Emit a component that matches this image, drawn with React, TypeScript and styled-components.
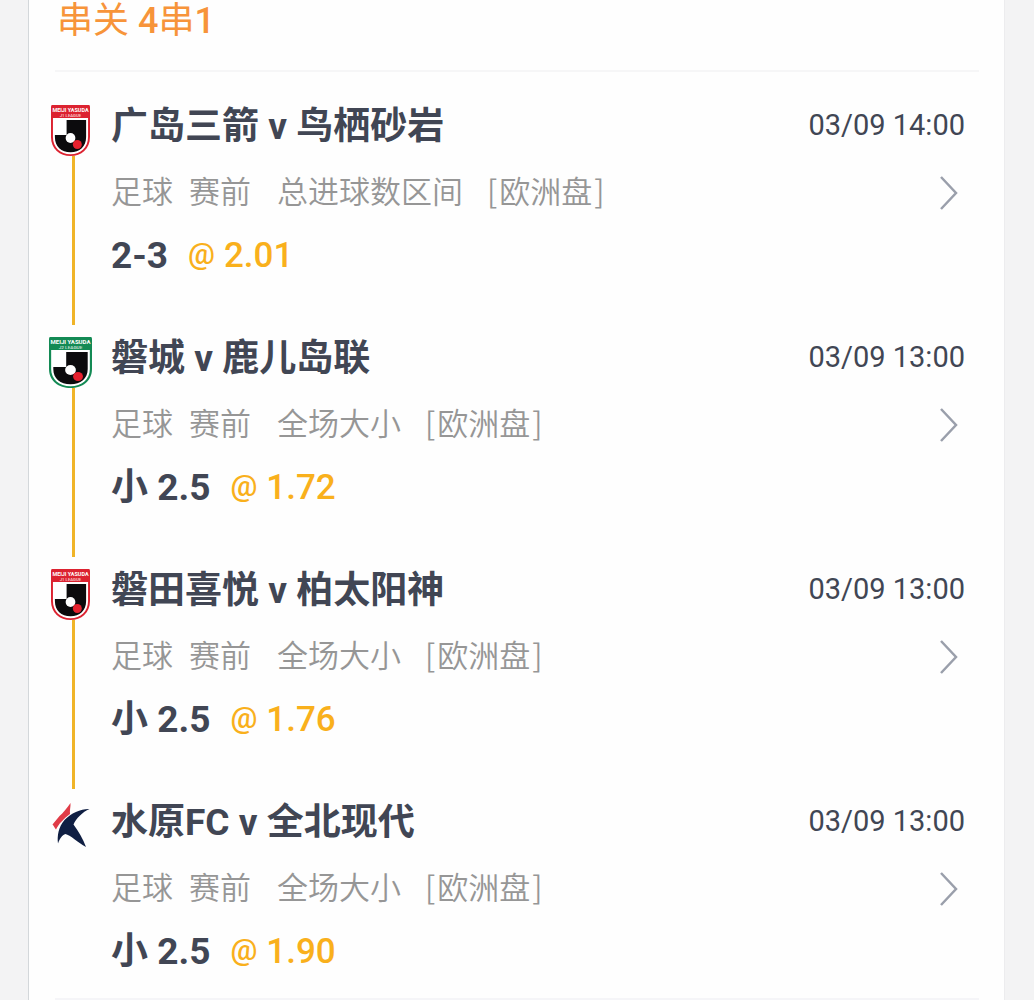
import React from "react";
import styled, { createGlobalStyle } from "styled-components";

const GlobalStyle = createGlobalStyle`
  * { box-sizing: border-box; }
  body {
    margin: 0;
    background: #f3f3f4;
    font-family: Roboto, "Noto Sans CJK SC", sans-serif;
    color: #414654;
  }
`;

const Slip = styled.main`
  min-height: 100vh;
  margin: 0 29px 0 28px;
  padding: 0 25px 0 26px;
  background: #fefefe;
  border-left: 1px solid #d3d7da;
  border-right: 1px solid #ececee;
`;

const Heading = styled.h1`
  margin: 0;
  padding: 0 2px 28px;
  font-size: 36px;
  line-height: 42px;
  font-weight: 400;
  color: #f7943a;
  border-bottom: 2px solid #f6f6f7;
`;

const Count = styled.span`
  font-weight: 500;
`;

const Legs = styled.ol`
  list-style: none;
  margin: 0;
  padding: 33px 14px 25px 0;
  border-bottom: 2px solid #f5f5f8;
`;

const Leg = styled.li`
  display: flex;
  gap: 18px;
  margin-left: -7px;
`;

const Rail = styled.div`
  flex: none;
  width: 45px;
  display: flex;
  flex-direction: column;
  align-items: center;
`;

const RailLine = styled.div`
  flex: 1;
  width: 3px;
  margin: 0 0 12px 5px;
  background: #f0b428;
`;

const Body = styled.div<{ $last: boolean }>`
  flex: 1;
  display: flex;
  flex-direction: column;
  gap: 26px;
  padding-bottom: ${(p) => (p.$last ? 2 : 62)}px;
`;

const Row = styled.div`
  display: flex;
  align-items: center;
  justify-content: space-between;
  height: 40px;
`;

const Teams = styled.h2`
  margin: 0;
  padding-top: 3px;
  font-size: 37px;
  line-height: 40px;
  font-weight: 700;
`;

const Kickoff = styled.time`
  font-size: 29px;
  line-height: 40px;
`;

const Meta = styled.div`
  display: flex;
  gap: 16px;
  padding-bottom: 3px;
  font-family: "Noto Sans CJK SC", sans-serif;
  font-size: 31px;
  line-height: 40px;
  font-weight: 350;
  color: #969696;
`;

const Market = styled.span`
  margin-left: 10px;
`;

const Handicap = styled.span`
  display: flex;
  gap: 2px;
  margin-left: 8px;
`;

const OpenButton = styled.button`
  display: flex;
  margin: 0;
  padding: 3px 6px 0;
  border: 0;
  background: none;
  cursor: pointer;
`;

const Pick = styled.div`
  display: flex;
  align-items: center;
  gap: 20px;
  line-height: 38px;
`;

const Selection = styled.strong`
  font-size: 37px;
  font-weight: 700;
`;

const Odds = styled.span`
  display: flex;
  align-items: center;
  gap: 9px;
  font-size: 35px;
  font-weight: 500;
  color: #f9b01c;
`;

const At = styled.span`
  padding-bottom: 4px;
  font-size: 30px;
  line-height: 34px;
`;

function LeagueShield({ color, division, width }: { color: string; division: string; width: number }) {
  return (
    <svg width={width} height="51" viewBox="0 0 40 51" preserveAspectRatio="none" role="img" aria-label={division}>
      <path d="M1 0H39Q40 0 40 2V32C40 44 31 51 20 51S0 44 0 32V2Q0 0 1 0Z" fill={color} />
      <path d="M2 13H38V32C38 42.500 30.500 49.200 20 49.200S2 42.500 2 32Z" fill="#fff" />
      <path d="M16 15H36V32C36 41.500 29.500 47.200 20 47.200S4 41.500 4 32V30H16Z" fill="#0c0b0d" />
      <circle cx="20" cy="33" r="5" fill="#fff" />
      <circle cx="27" cy="39.500" r="4.600" fill="#e6212e" />
      <text x="20" y="6.800" fontSize="5.600" fontWeight="700" textAnchor="middle" fill="#fff">MEIJI YASUDA</text>
      <text x="20" y="11.800" fontSize="4.400" fontWeight="500" textAnchor="middle" fill="#fff" fillOpacity="0.8">{division}</text>
    </svg>
  );
}

function KLeagueMark() {
  return (
    <svg width="41" height="48" viewBox="0 0 41 48" role="img" aria-label="K LEAGUE">
      <path d="M20.500 2C17 7 13 12 9.500 15L2.500 23.500C4 25 5 27.500 6 28.500C8.500 23 14 17.500 20 13C19.500 9 20.800 6 20.500 2Z" fill="#e03c48" />
      <path d="M39.500 8C32 7.500 21 12 14.500 19C8.500 26 7 35 8 42.500C9.500 38 12 34 15.500 33C20 34 28 41.500 36 46C33 38 28.500 30 23.500 23.500C26 17.500 32.500 11 39.500 8Z" fill="#101f43" />
    </svg>
  );
}

type LegData = {
  badge: React.ReactNode;
  teams: string;
  time: string;
  market: string;
  selection: string;
  odds: string;
};

const legs: LegData[] = [
  { badge: <LeagueShield color="#dc2230" division="J1 LEAGUE" width={39} />, teams: "广岛三箭 v 鸟栖砂岩", time: "03/09 14:00", market: "总进球数区间", selection: "2-3", odds: "2.01" },
  { badge: <LeagueShield color="#138a54" division="J2 LEAGUE" width={43} />, teams: "磐城 v 鹿儿岛联", time: "03/09 13:00", market: "全场大小", selection: "小 2.5", odds: "1.72" },
  { badge: <LeagueShield color="#dc2230" division="J1 LEAGUE" width={39} />, teams: "磐田喜悦 v 柏太阳神", time: "03/09 13:00", market: "全场大小", selection: "小 2.5", odds: "1.76" },
  { badge: <KLeagueMark />, teams: "水原FC v 全北现代", time: "03/09 13:00", market: "全场大小", selection: "小 2.5", odds: "1.90" },
];

export default function App() {
  return (
    <>
      <GlobalStyle />
      <Slip>
        <Heading>串关 <Count>4</Count>串<Count>1</Count></Heading>
        <Legs>
          {legs.map((leg, i) => {
            const last = i === legs.length - 1;
            return (
              <Leg key={leg.teams}>
                <Rail>
                  {leg.badge}
                  {!last && <RailLine />}
                </Rail>
                <Body $last={last}>
                  <Row>
                    <Teams>{leg.teams}</Teams>
                    <Kickoff>{leg.time}</Kickoff>
                  </Row>
                  <Row>
                    <Meta>
                      <span>足球</span>
                      <span>赛前</span>
                      <Market>{leg.market}</Market>
                      <Handicap>
                        <span>[</span>
                        <span>欧洲盘</span>
                        <span>]</span>
                      </Handicap>
                    </Meta>
                    <OpenButton type="button" aria-label={leg.teams}>
                      <svg width="20" height="36" viewBox="0 0 20 36" fill="none" stroke="#9a9fab" strokeWidth="2.500">
                        <path d="M2 2L17 18L2 34" />
                      </svg>
                    </OpenButton>
                  </Row>
                  <Pick>
                    <Selection>{leg.selection}</Selection>
                    <Odds>
                      <At>@</At>
                      <span>{leg.odds}</span>
                    </Odds>
                  </Pick>
                </Body>
              </Leg>
            );
          })}
        </Legs>
      </Slip>
    </>
  );
}
